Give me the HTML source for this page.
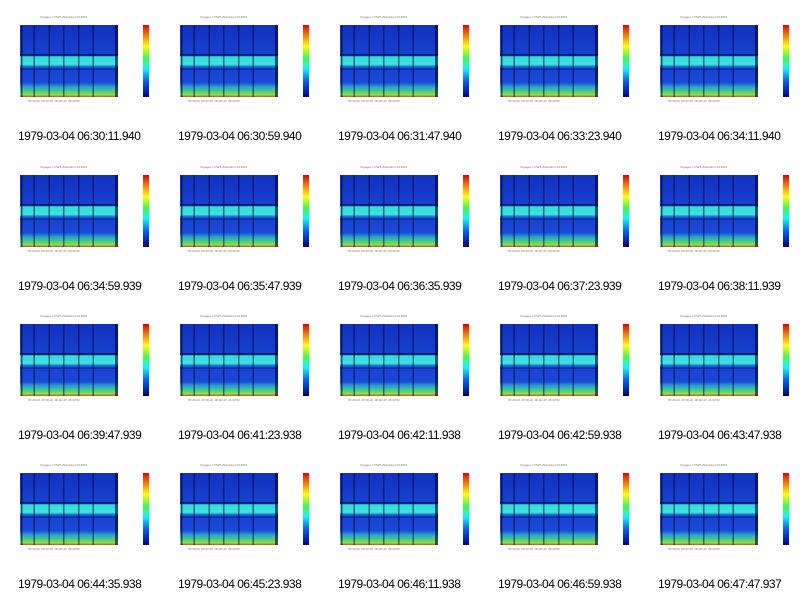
<!DOCTYPE html>
<html><head><style>
body{margin:0;width:800px;height:596px;background:#fff;position:relative;overflow:hidden;font-family:"Liberation Sans",sans-serif}
.c{position:absolute;width:160px;height:150px}
.c::before{content:"Voyager-1 PWS Wideband 1/16351";position:absolute;left:40px;top:15px;font-size:3px;color:#777;white-space:nowrap}
.c::after{content:"06:30:20  06:30:30  06:30:40  06:30:50";position:absolute;left:28px;top:99px;font-size:3px;color:#777;white-space:pre}
.p{position:absolute;left:20px;top:25px;width:98px;height:72px;
background:
linear-gradient(90deg,transparent 0 1%,rgba(0,0,40,.6) 1% 2.5%,transparent 2.5% 14%,rgba(0,0,40,.5) 14% 15.5%,transparent 15.5% 29%,rgba(0,0,40,.5) 29% 30.5%,transparent 30.5% 44%,rgba(0,0,40,.5) 44% 45.5%,transparent 45.5% 59%,rgba(0,0,40,.5) 59% 60.5%,transparent 60.5% 74%,rgba(0,0,40,.5) 74% 75.5%,transparent 75.5% 97%,rgba(0,0,40,.6) 97% 100%),
linear-gradient(180deg,#1232c0 0,#1640d0 40%,#051860 40.5%,#061a70 42.5%,#30dce0 44%,#40e4d8 55%,#2080e0 57%,#1a48d0 60%,#08208a 61%,#1a44d4 63%,#1a4ad8 80%,#2aa0d0 86%,#40d080 92%,#90e040 97%,#e04020 100%);}
.cb{position:absolute;left:143px;top:25px;width:6px;height:72px;background:linear-gradient(180deg,#e00000,#ff8000 15%,#ffff00 30%,#40ff40 45%,#00ffff 60%,#0060ff 78%,#000080)}
.l{position:absolute;left:18px;top:129px;font-size:12px;letter-spacing:-0.5px;color:#000;white-space:nowrap}
</style></head><body>
<div class="c" style="left:0;top:0"><div class="p"></div><div class="cb"></div><div class="l">1979-03-04 06:30:11.940</div></div>
<div class="c" style="left:160px;top:0"><div class="p"></div><div class="cb"></div><div class="l">1979-03-04 06:30:59.940</div></div>
<div class="c" style="left:320px;top:0"><div class="p"></div><div class="cb"></div><div class="l">1979-03-04 06:31:47.940</div></div>
<div class="c" style="left:480px;top:0"><div class="p"></div><div class="cb"></div><div class="l">1979-03-04 06:33:23.940</div></div>
<div class="c" style="left:640px;top:0"><div class="p"></div><div class="cb"></div><div class="l">1979-03-04 06:34:11.940</div></div>
<div class="c" style="left:0;top:150px"><div class="p"></div><div class="cb"></div><div class="l">1979-03-04 06:34:59.939</div></div>
<div class="c" style="left:160px;top:150px"><div class="p"></div><div class="cb"></div><div class="l">1979-03-04 06:35:47.939</div></div>
<div class="c" style="left:320px;top:150px"><div class="p"></div><div class="cb"></div><div class="l">1979-03-04 06:36:35.939</div></div>
<div class="c" style="left:480px;top:150px"><div class="p"></div><div class="cb"></div><div class="l">1979-03-04 06:37:23.939</div></div>
<div class="c" style="left:640px;top:150px"><div class="p"></div><div class="cb"></div><div class="l">1979-03-04 06:38:11.939</div></div>
<div class="c" style="left:0;top:299px"><div class="p"></div><div class="cb"></div><div class="l">1979-03-04 06:39:47.939</div></div>
<div class="c" style="left:160px;top:299px"><div class="p"></div><div class="cb"></div><div class="l">1979-03-04 06:41:23.938</div></div>
<div class="c" style="left:320px;top:299px"><div class="p"></div><div class="cb"></div><div class="l">1979-03-04 06:42:11.938</div></div>
<div class="c" style="left:480px;top:299px"><div class="p"></div><div class="cb"></div><div class="l">1979-03-04 06:42:59.938</div></div>
<div class="c" style="left:640px;top:299px"><div class="p"></div><div class="cb"></div><div class="l">1979-03-04 06:43:47.938</div></div>
<div class="c" style="left:0;top:448px"><div class="p"></div><div class="cb"></div><div class="l">1979-03-04 06:44:35.938</div></div>
<div class="c" style="left:160px;top:448px"><div class="p"></div><div class="cb"></div><div class="l">1979-03-04 06:45:23.938</div></div>
<div class="c" style="left:320px;top:448px"><div class="p"></div><div class="cb"></div><div class="l">1979-03-04 06:46:11.938</div></div>
<div class="c" style="left:480px;top:448px"><div class="p"></div><div class="cb"></div><div class="l">1979-03-04 06:46:59.938</div></div>
<div class="c" style="left:640px;top:448px"><div class="p"></div><div class="cb"></div><div class="l">1979-03-04 06:47:47.937</div></div>
</body></html>
